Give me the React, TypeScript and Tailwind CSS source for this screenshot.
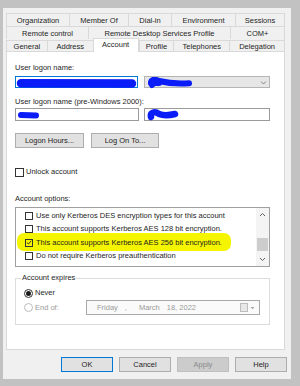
const ROW1 = [
    { label: 'Organization', w: 'w-[63px]' },
    { label: 'Member Of', w: 'w-[59px]' },
    { label: 'Dial-in', w: 'w-[43px]' },
    { label: 'Environment', w: 'w-[64px]' },
    { label: 'Sessions', w: 'w-[50px]' },
];

const ROW2 = [
    { label: 'Remote control', w: 'w-[82px]' },
    { label: 'Remote Desktop Services Profile', w: 'w-[142px]' },
    { label: 'COM+', w: 'w-[55px]' },
];

const ROW3 = [
    { label: 'General', w: 'w-[41px]' },
    { label: 'Address', w: 'w-[46px]' },
    { label: 'Account', w: 'w-[46px]' },
    { label: 'Profile', w: 'w-[35px]' },
    { label: 'Telephones', w: 'w-[56px]' },
    { label: 'Delegation', w: 'w-[55px]' },
];

const OPTIONS = [
    { label: 'Use only Kerberos DES encryption types for this account', checked: false },
    { label: 'This account supports Kerberos AES 128 bit encryption.', checked: false },
    { label: 'This account supports Kerberos AES 256 bit encryption.', checked: true },
    { label: 'Do not require Kerberos preauthentication', checked: false },
];

const BLUE = '#0a1cf8';

function Tab({ label, w, last }: { label: string; w: string; last: boolean }) {
    return (
        <div
            className={`${w} h-full border-t border-l border-[#d9d9d9] ${last ? 'border-r' : ''} flex items-center justify-center pt-px whitespace-nowrap`}
        >
            {label}
        </div>
    );
}

function Check({ checked, size, bg }: { checked: boolean; size: string; bg: string }) {
    return (
        <div className={`${size} ${bg} shrink-0 border border-[#333] flex items-center justify-center`}>
            {checked && (
                <svg width="7" height="7" viewBox="0 0 7 7">
                    <polyline points="1,3.5 2.8,5.3 6,1.5" fill="none" stroke="#222" strokeWidth="1" />
                </svg>
            )}
        </div>
    );
}

function Button({ label, className }: { label: string; className: string }) {
    return <div className={`h-[15px] flex items-center justify-center border ${className}`}>{label}</div>;
}

export default function App() {
    return (
        <div className="w-[300px] h-[386px] bg-[#c2c2c2] pt-[8px] pl-[3px] font-['Liberation_Sans',Arial,sans-serif] text-[7.5px] leading-[10px] text-[#1e1e1e]">
            <div className="w-[288px] h-[371px] bg-[#f0f0f0] pt-[5px] pl-[3px]">
                {/* Zakładki */}
                <div className="w-[279px]">
                    <div className="flex h-[13px]">
                        {ROW1.map((t, i) => (
                            <Tab key={t.label} label={t.label} w={t.w} last={i === ROW1.length - 1} />
                        ))}
                    </div>
                    <div className="flex h-[13px]">
                        {ROW2.map((t, i) => (
                            <Tab key={t.label} label={t.label} w={t.w} last={i === ROW2.length - 1} />
                        ))}
                    </div>
                    <div className="flex items-end h-[12px] border-r border-[#d9d9d9]">
                        {ROW3.map((t) =>
                            t.label === 'Account' ? (
                                <div
                                    key={t.label}
                                    className={`${t.w} relative z-10 h-[14px] -mb-px bg-white border-t border-l border-r border-[#d9d9d9] flex items-start justify-center pt-[1px]`}
                                >
                                    {t.label}
                                </div>
                            ) : (
                                <div
                                    key={t.label}
                                    className={`${t.w} h-[11px] border-t border-l border-[#d9d9d9] flex items-center justify-center pt-[2px]`}
                                >
                                    {t.label}
                                </div>
                            )
                        )}
                    </div>
                </div>

                {/* Panel */}
                <div className="w-[279px] h-[299px] border border-[#d9d9d9] bg-white pl-[8px]">
                    <div className="mt-[11px] h-[10px]">User logon name:</div>
                    <div className="mt-[3px] flex gap-[6px]">
                        <div className="relative w-[123px] h-[12px] border border-[#0078d7] bg-white">
                            <svg className="absolute inset-0" width="123" height="12">
                                <path d="M5,6.3 L116,6.6" stroke={BLUE} strokeWidth="8.5" strokeLinecap="round" fill="none" />
                            </svg>
                        </div>
                        <div className="relative w-[126px] h-[12px] border border-[#b4b4b4] bg-[#e6e6e6]">
                            <svg className="absolute inset-0" width="126" height="12">
                                <path
                                    d="M7,8 C4,3 9,1.5 14,4 C22,6 34,7 44,6.3"
                                    stroke={BLUE}
                                    strokeWidth="6"
                                    strokeLinecap="round"
                                    fill="none"
                                />
                                <path d="M6,6 L14,6" stroke={BLUE} strokeWidth="6" strokeLinecap="round" />
                                <polyline points="116,4.5 118.5,7 121,4.5" fill="none" stroke="#777" strokeWidth="0.9" />
                            </svg>
                        </div>
                    </div>
                    <div className="mt-[9px] h-[10px]">User logon name (pre-Windows 2000):</div>
                    <div className="mt-[1px] flex gap-[5px]">
                        <div className="relative w-[124px] h-[13px] border border-[#9a9a9a] bg-white">
                            <svg className="absolute inset-0" width="124" height="13">
                                <path d="M5,6 L20,6.5" stroke={BLUE} strokeWidth="6" strokeLinecap="round" fill="none" />
                            </svg>
                        </div>
                        <div className="relative w-[126px] h-[13px] border border-[#9a9a9a] bg-white">
                            <svg className="absolute inset-0" width="126" height="13">
                                <path
                                    d="M6,8 C5,3 10,2 14,5 C19,7 26,6 30,5"
                                    stroke={BLUE}
                                    strokeWidth="6.5"
                                    strokeLinecap="round"
                                    fill="none"
                                />
                            </svg>
                        </div>
                    </div>

                    <div className="mt-[12px] flex gap-[7px]">
                        <Button label="Logon Hours..." className="w-[69px] bg-[#e1e1e1] border-[#adadad]" />
                        <Button label="Log On To..." className="w-[68px] bg-[#e1e1e1] border-[#adadad]" />
                    </div>

                    <div className="mt-[19px] h-[10px] flex items-center gap-[2px]">
                        <Check checked={false} size="w-[9px] h-[9px]" bg="bg-white" />
                        <span>Unlock account</span>
                    </div>

                    <div className="mt-[17px] h-[10px]">Account options:</div>
                    <div className="relative mt-[3px] w-[255px] h-[60px] border border-[#a0a0a0] bg-white flex">
                        {/* Zakreślacz */}
                        <div className="absolute left-[1px] top-[25px] w-[214px] h-[18px] rounded-[7px] bg-[#f5f500]" />
                        <div className="relative flex-1 pt-px pl-[9px]">
                            {OPTIONS.map((o) => (
                                <div key={o.label} className="h-[13.5px] flex items-center gap-[3px] whitespace-nowrap">
                                    <Check checked={o.checked} size="w-[8px] h-[8px]" bg="bg-transparent" />
                                    <span>{o.label}</span>
                                </div>
                            ))}
                        </div>
                        <div className="relative w-[13px] h-full bg-[#f4f4f4] flex flex-col items-center">
                            <svg className="mt-[4px]" width="7" height="5" viewBox="0 0 7 5">
                                <polyline points="1,4 3.5,1.5 6,4" fill="none" stroke="#606060" strokeWidth="1" />
                            </svg>
                            <div className="mt-[21px] w-[11px] h-[13px] bg-[#cdcdcd]" />
                            <svg className="mt-[6px]" width="7" height="5" viewBox="0 0 7 5">
                                <polyline points="1,1 3.5,3.5 6,1" fill="none" stroke="#606060" strokeWidth="1" />
                            </svg>
                        </div>
                    </div>

                    <div className="relative mt-[11px] w-[255px] h-[47px] border border-[#dcdcdc] pl-[8px] pt-[9px]">
                        <div className="absolute -top-[6px] left-[5px] bg-white px-px h-[10px]">Account expires</div>
                        <div className="h-[10px] flex items-center gap-[2px]">
                            <div className="w-[9px] h-[9px] rounded-full border border-[#333] bg-white flex items-center justify-center">
                                <div className="w-[5px] h-[5px] rounded-full bg-[#1a1a1a]" />
                            </div>
                            <span>Never</span>
                        </div>
                        <div className="mt-[2px] h-[15px] flex items-center">
                            <div className="w-[62px] flex items-center gap-[2px] text-[#9a9a9a]">
                                <div className="w-[9px] h-[9px] rounded-full border border-[#bcbcbc] bg-white" />
                                <span>End of:</span>
                            </div>
                            <div className="w-[174px] h-[15px] border border-[#a8a8a8] bg-[#fafafa] flex items-center text-[#9a9a9a]">
                                <span className="ml-[10px]">Friday</span>
                                <span className="ml-[7px]">,</span>
                                <span className="ml-[12px]">March</span>
                                <span className="ml-[7px]">18, 2022</span>
                                <div className="ml-auto mr-[4px] flex items-center gap-[2px]">
                                    <div className="w-[8px] h-[9px] border border-[#bdbdbd] bg-[#e8e8e8]" />
                                    <svg width="5" height="4" viewBox="0 0 5 4">
                                        <polygon points="0.5,1 4.5,1 2.5,3.2" fill="#a8a8a8" />
                                    </svg>
                                </div>
                            </div>
                        </div>
                    </div>
                </div>

                {/* Przyciski dialogu */}
                <div className="mt-[7px] pr-[4px] flex justify-end gap-[6px]">
                    <Button label="OK" className="w-[52px] bg-[#e1e1e1] border-[#0078d7]" />
                    <Button label="Cancel" className="w-[52px] bg-[#e1e1e1] border-[#adadad]" />
                    <Button label="Apply" className="w-[52px] bg-[#cccccc] border-[#bfbfbf] text-[#8a8a8a]" />
                    <Button label="Help" className="w-[52px] bg-[#e1e1e1] border-[#adadad]" />
                </div>
            </div>
        </div>
    );
}
